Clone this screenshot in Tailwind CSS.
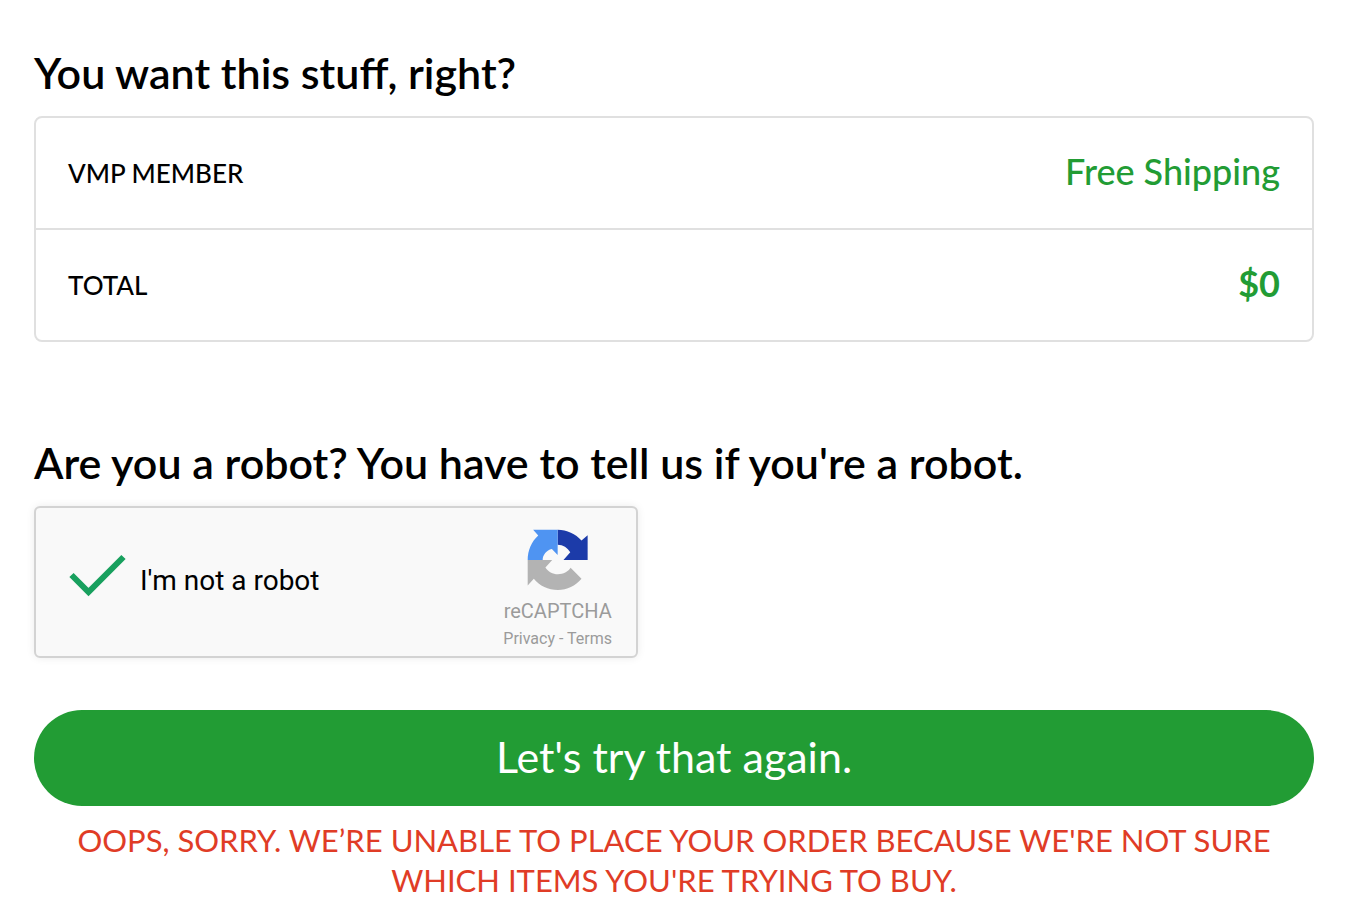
<!DOCTYPE html>
<html lang="en">
<head>
  <meta charset="utf-8" />
  <meta name="viewport" content="width=device-width, initial-scale=1" />
  <title>Checkout</title>
  <script src="https://cdn.jsdelivr.net/npm/@tailwindcss/browser@4"></script>
</head>

<body class="bg-white text-black font-['Lato',sans-serif]">
  <form class="pt-12 pb-5 pl-[34px] pr-[38px]" onsubmit="return false">

    <!-- Order summary -->
    <section>
      <h2 class="pb-[18px] text-[43px] leading-[50px] font-semibold">You want this stuff, right?</h2>
      <dl class="border-2 border-[#e0e0e0] rounded-lg divide-y-2 divide-[#e0e0e0]">
        <div class="h-[110px] box-content px-8 flex items-center justify-between">
          <dt class="text-[26px] font-medium">VMP MEMBER</dt>
          <dd class="pb-1 text-[36px] font-medium text-[#229c34]">Free Shipping</dd>
        </div>
        <div class="h-[110px] box-content px-8 flex items-center justify-between">
          <dt class="text-[26px] font-medium">TOTAL</dt>
          <dd class="pb-1 text-[36px] font-bold text-[#229c34]">$0</dd>
        </div>
      </dl>
    </section>

    <!-- Captcha -->
    <section class="mt-24">
      <h2 class="pb-[18px] text-[43px] leading-[50px] font-semibold">Are you a robot? You have to tell us if you're a robot.</h2>
      <div class="w-full max-w-[604px] h-[152px] pl-8 pr-6 flex justify-between bg-[#f9f9f9] border-2 border-[#d3d3d3] rounded-md shadow-[0_0_8px_rgba(0,0,0,0.08)] font-['Roboto',sans-serif]">
        <label class="pb-0.5 flex items-center gap-3 text-[28px]">
          <span class="relative w-[60px] h-12 mb-1.5">
            <input type="checkbox" checked class="peer absolute inset-0 w-full h-full appearance-none">
            <svg class="absolute inset-0 w-full h-full pointer-events-none invisible peer-checked:visible" viewBox="0 0 60 48" fill="none" stroke="#18a05e" stroke-width="6">
              <path d="M3.500 21 20.500 38 55.500 3"/>
            </svg>
          </span>
          I'm not a robot
        </label>

        <div class="pt-[21px] flex flex-col items-center text-[#9b9b9b]">
          <svg class="w-[62px] h-[62px]" viewBox="0 0 182 182">
            <path fill="#1c3ba9" d="M90 2C117 2 143 14 160 34L178 18V91H107L127 68C119 55 106 46 90 46Z"/>
            <path fill="#4f94f2" d="M90 2H18L33 19C13 37 2 63 2 91H46C46 77 57 62 73 59L90 76Z"/>
            <path fill="#b3b3b3" d="M2 91H74L54 113C62 125 75 133 91 133C107 133 120 126 128 114L160 146C142 167 118 179 91 179C62 179 37 167 20 146L2 166Z"/>
          </svg>
          <span class="mt-2 text-[20px] leading-6">reCAPTCHA</span>
          <span class="mt-1 text-[16px] leading-6"><a href="#">Privacy</a> - <a href="#">Terms</a></span>
        </div>
      </div>
    </section>

    <button type="submit" class="mt-[52px] w-full h-24 pb-0.5 rounded-full bg-[#229c34] text-white text-[43px]">Let's try that again.</button>
    <p class="mt-3.5 px-8 text-center text-[31px] leading-10 text-[#e03c26]">OOPS, SORRY. WE’RE UNABLE TO PLACE YOUR ORDER BECAUSE WE'RE NOT SURE WHICH ITEMS YOU'RE TRYING TO BUY.</p>
  </form>
</body>
</html>
